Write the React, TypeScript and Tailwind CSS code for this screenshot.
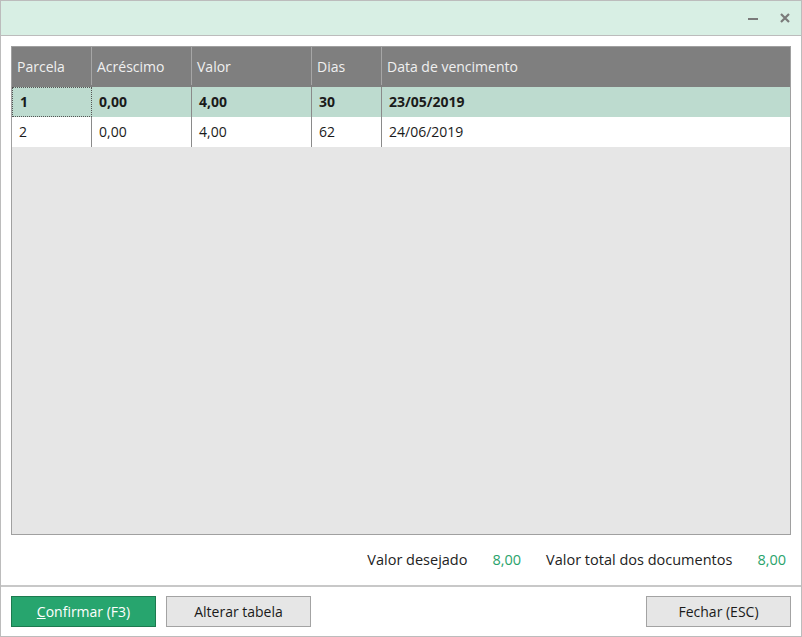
import type { ReactNode } from "react";

const cols = ["w-[80px]", "w-[100px]", "w-[120px]", "w-[70px]", "flex-1"];

const rows = [
  { cells: ["1", "0,00", "4,00", "30", "23/05/2019"], selected: true },
  { cells: ["2", "0,00", "4,00", "62", "24/06/2019"], selected: false },
];

const Button = ({ children, primary }: { children: ReactNode; primary?: boolean }) => (
  <button
    className={
      primary
        ? "flex h-[31px] w-[145px] items-center justify-center border border-[#1c7a4f] bg-[#27a56e] text-[14px] text-white"
        : "flex h-[31px] w-[145px] items-center justify-center border border-[#a3a3a3] bg-[#e6e6e6] text-[14px] text-[#1a1a1a]"
    }
  >
    {children}
  </button>
);

export default function App() {
  return (
    <div className="flex h-[637px] w-[802px] flex-col border border-[#bcbcbc] bg-white font-['Open_Sans',sans-serif] text-[14px] text-[#1a1a1a]">
      {/* title bar */}
      <div className="flex h-[35px] shrink-0 items-center justify-end gap-[20px] border-b border-[#bcbcbc] bg-[#d8efe4] pr-[10px]">
        <svg width="12" height="12" viewBox="0 0 12 12">
          <rect x="1" y="6" width="10" height="2" fill="#7a7a7a" />
        </svg>
        <svg width="12" height="12" viewBox="0 0 12 12">
          <path d="M2 2 L10 10 M10 2 L2 10" stroke="#7a7a7a" strokeWidth="2.2" />
        </svg>
      </div>

      {/* table */}
      <div className="px-[10px] pt-[10px]">
        <div className="flex h-[489px] flex-col border border-[#a0a0a0] bg-[#e6e6e6]">
          <div className="flex h-[40px] bg-[#7f7f7f] pb-[2px] text-[#f0f0f0]">
            {["Parcela", "Acréscimo", "Valor", "Dias", "Data de vencimento"].map((h, i) => (
              <div
                key={h}
                className={`${cols[i]} flex items-center px-[5px] ${i < 4 ? "border-r border-[#a6a6a6]" : ""}`}
              >
                {h}
              </div>
            ))}
          </div>
          {rows.map((r) => (
            <div
              key={r.cells[0]}
              className={`flex h-[30px] ${r.selected ? "bg-[#bddbcf] font-bold" : "bg-white"}`}
            >
              {r.cells.map((c, i) => (
                <div
                  key={i}
                  className={`${cols[i]} flex items-center px-[7px] pb-[1px] ${i < 4 ? "border-r border-[#8a8a8a]" : ""} ${
                    r.selected && i === 0 ? "border border-dotted border-[#555]" : ""
                  }`}
                >
                  {c}
                </div>
              ))}
            </div>
          ))}
        </div>
      </div>

      {/* totals */}
      <div className="flex h-[50px] items-center justify-end gap-[25px] pr-[15px] text-[14.5px] text-[#222]">
        <span>Valor desejado</span>
        <span className="text-[#2aa36b]">8,00</span>
        <span>Valor total dos documentos</span>
        <span className="text-[#2aa36b]">8,00</span>
      </div>

      {/* footer */}
      <div className="flex flex-1 items-start gap-[10px] border-t-2 border-[#c8c8c8] px-[10px] pt-[9px]">
        <Button primary>
          <span>
            <span className="underline">C</span>onfirmar (F3)
          </span>
        </Button>
        <Button>Alterar tabela</Button>
        <div className="flex-1" />
        <Button>Fechar (ESC)</Button>
      </div>
    </div>
  );
}
